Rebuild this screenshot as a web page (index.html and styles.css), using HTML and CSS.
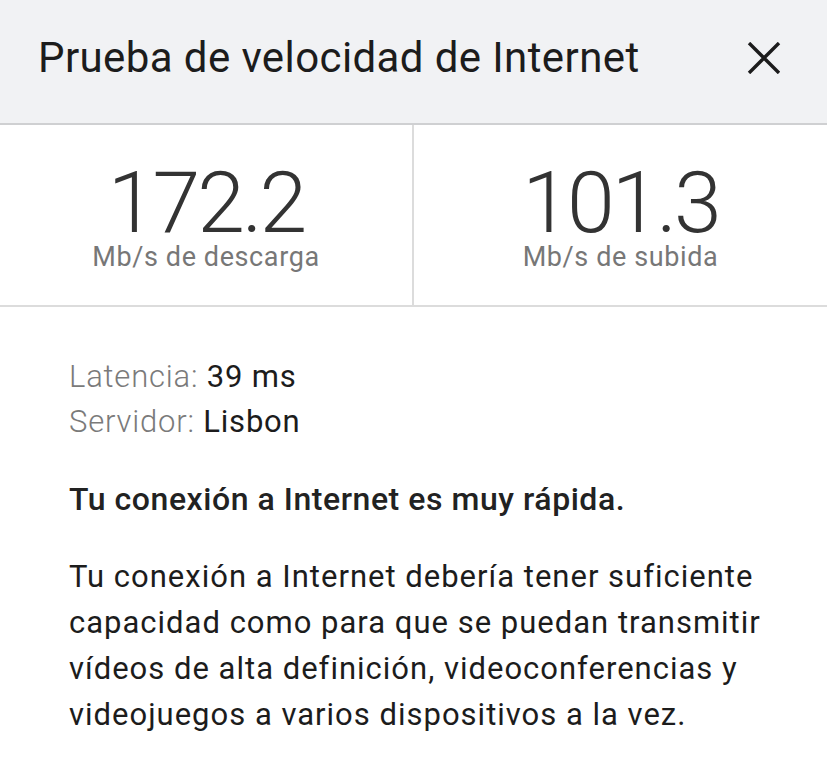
FILE: index.html
```html
<!DOCTYPE html>
<html lang="es">
<head>
<meta charset="utf-8">
<link rel="stylesheet" href="styles.css">
</head>
<body>
<div class="dialog">
  <header class="header">
    <h1 class="title">Prueba de velocidad de Internet</h1>
    <button class="close" aria-label="Cerrar">
      <svg width="34" height="32" viewBox="0 0 34 32"><path d="M2 1 L32 31 M32 1 L2 31" stroke="#1c1c1c" stroke-width="3.4" stroke-linecap="butt" fill="none"/></svg>
    </button>
  </header>
  <section class="stats">
    <div class="stat stat-left">
      <div class="value">172.2</div>
      <div class="unit">Mb/s de descarga</div>
    </div>
    <div class="stat">
      <div class="value">101.3</div>
      <div class="unit">Mb/s de subida</div>
    </div>
  </section>
  <section class="info">
    <div class="meta">
      <div class="meta-row"><span class="meta-label">Latencia:</span> 39 ms</div>
      <div class="meta-row"><span class="meta-label">Servidor:</span> Lisbon</div>
    </div>
    <p class="verdict">Tu conexión a Internet es muy rápida.</p>
    <p class="desc">Tu conexión a Internet debería tener suficiente capacidad como para que se puedan transmitir vídeos de alta definición, videoconferencias y videojuegos a varios dispositivos a la vez.</p>
  </section>
</div>
</body>
</html>
```
FILE: styles.css
```css
* { box-sizing: border-box; }
html, body { margin: 0; padding: 0; background: #ffffff; }
body {
  font-family: Roboto, "Noto Sans", "Liberation Sans", sans-serif;
  color: #1c1c1c;
  width: 827px;
  height: 768px;
  overflow: hidden;
}
.header {
  height: 125px;
  background: #f1f2f4;
  border-bottom: 2px solid #cfd0d2;
  display: flex;
  align-items: center;
  justify-content: space-between;
  padding: 0 46px 8px 38px;
}
.title {
  margin: 0;
  font-size: 42px;
  font-weight: 400;
  letter-spacing: 0.4px;
  color: #1c1c1c;
}
.close {
  border: 0;
  background: transparent;
  padding: 0;
  width: 34px;
  height: 32px;
  display: flex;
}
.stats {
  display: flex;
  height: 182px;
  border-bottom: 2px solid #dcdcdc;
}
.stat {
  flex: 1;
  display: flex;
  flex-direction: column;
  align-items: center;
  padding-top: 37px;
}
.stat-left {
  flex: 0 0 414px;
  border-right: 2px solid #dcdcdc;
}
.value {
  font-size: 86px;
  font-weight: 300;
  line-height: 82px;
  letter-spacing: -3px;
  color: #333333;
}
.unit {
  font-size: 27px;
  font-weight: 400;
  line-height: 26px;
  color: #777777;
  letter-spacing: 0.6px;
}
.info {
  padding: 47px 20px 0 69px;
}
.meta-row {
  font-size: 31px;
  line-height: 45px;
  letter-spacing: 0.8px;
  color: #1c1c1c;
}
.meta-label {
  font-weight: 300;
  color: #7a7a7a;
}
.verdict {
  margin: 35px 0 0;
  font-size: 32px;
  font-weight: 500;
  line-height: 40px;
  letter-spacing: 0.55px;
  color: #222222;
}
.desc {
  margin: 35px 0 0;
  font-size: 31px;
  line-height: 46px;
  font-weight: 400;
  letter-spacing: 1px;
}
```
